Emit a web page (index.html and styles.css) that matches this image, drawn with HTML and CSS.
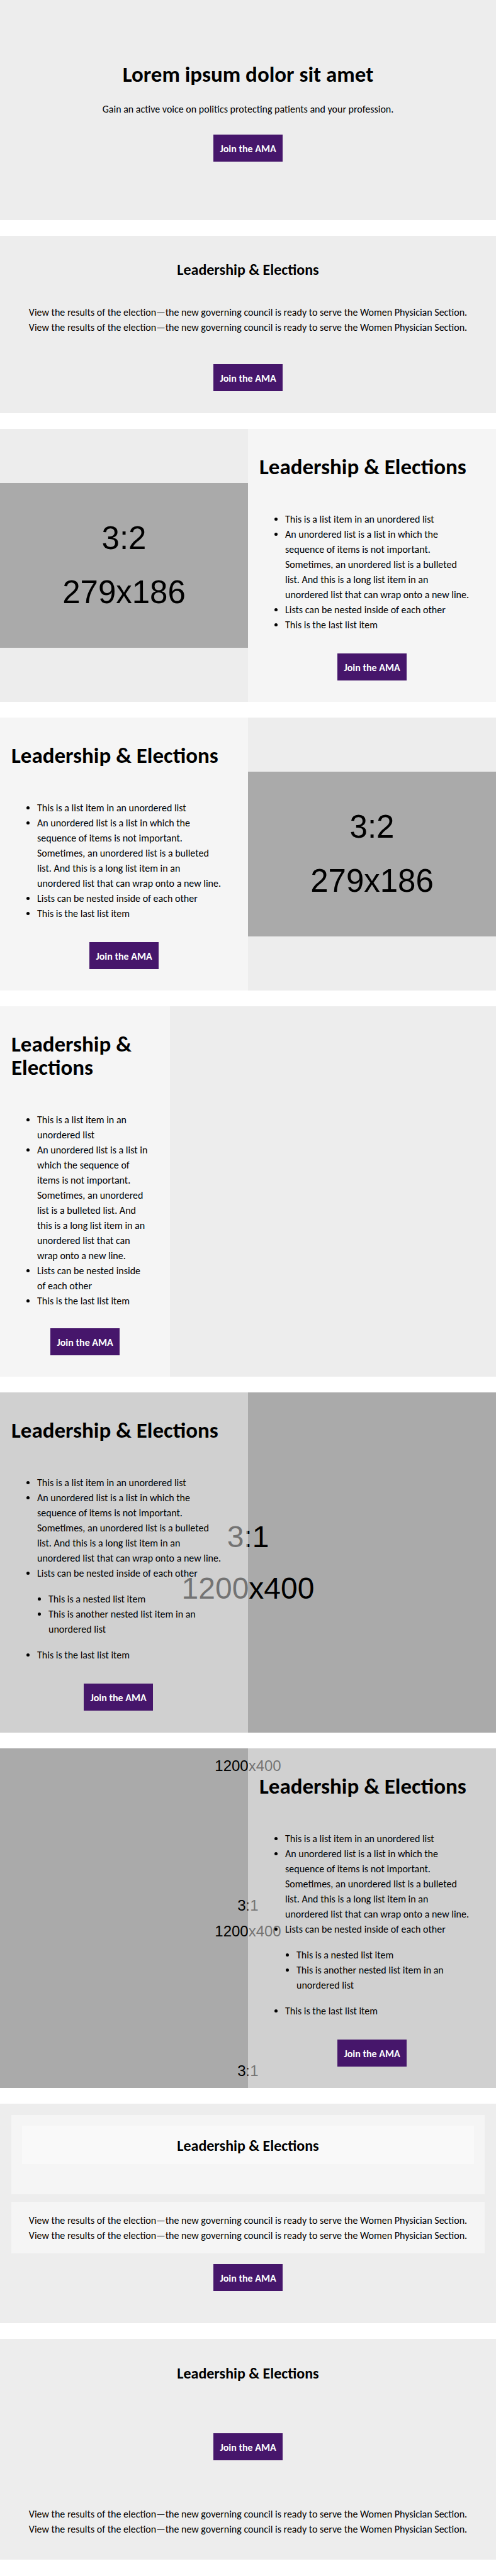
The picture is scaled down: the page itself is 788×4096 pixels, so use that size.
FILE: index.html
```html
<!DOCTYPE html>
<html lang="en">
<head>
<meta charset="utf-8">
<meta name="viewport" content="width=device-width, initial-scale=1">
<title>Leadership &amp; Elections</title>
<link rel="stylesheet" href="styles.css">
</head>
<body>
<main class="page">
  <section class="band hero">
    <h1 class="title">Lorem ipsum dolor sit amet</h1>
    <p class="hero-text">Gain an active voice on politics protecting patients and your profession.</p>
    <a class="button" href="#join">Join the AMA</a>
  </section>

  <section class="band notice">
    <h2 class="subtitle">Leadership &amp; Elections</h2>
    <p class="notice-text">View the results of the election—the new governing council is ready to serve the Women Physician Section. View the results of the election—the new governing council is ready to serve the Women Physician Section.</p>
    <a class="button" href="#join">Join the AMA</a>
  </section>

  <section class="band split">
    <div class="media">
      <div class="placeholder"><span>3:2</span><span>279x186</span></div>
    </div>
    <div class="panel">
      <h2 class="title">Leadership &amp; Elections</h2>
      <ul class="list">
        <li>This is a list item in an unordered list</li>
        <li>An unordered list is a list in which the sequence of items is not important. Sometimes, an unordered list is a bulleted list. And this is a long list item in an unordered list that can wrap onto a new line.</li>
        <li>Lists can be nested inside of each other</li>
        <li>This is the last list item</li>
      </ul>
      <a class="button" href="#join">Join the AMA</a>
    </div>
  </section>

  <section class="band split">
    <div class="panel">
      <h2 class="title">Leadership &amp; Elections</h2>
      <ul class="list">
        <li>This is a list item in an unordered list</li>
        <li>An unordered list is a list in which the sequence of items is not important. Sometimes, an unordered list is a bulleted list. And this is a long list item in an unordered list that can wrap onto a new line.</li>
        <li>Lists can be nested inside of each other</li>
        <li>This is the last list item</li>
      </ul>
      <a class="button" href="#join">Join the AMA</a>
    </div>
    <div class="media">
      <div class="placeholder"><span>3:2</span><span>279x186</span></div>
    </div>
  </section>

  <section class="band split split-third">
    <div class="panel">
      <h2 class="title">Leadership &amp; Elections</h2>
      <ul class="list">
        <li>This is a list item in an unordered list</li>
        <li>An unordered list is a list in which the sequence of items is not important. Sometimes, an unordered list is a bulleted list. And this is a long list item in an unordered list that can wrap onto a new line.</li>
        <li>Lists can be nested inside of each other</li>
        <li>This is the last list item</li>
      </ul>
      <a class="button" href="#join">Join the AMA</a>
    </div>
  </section>

  <section class="band split backdrop-band">
    <div class="backdrop backdrop-cover"><span>3:1</span><span>1200x400</span></div>
    <div class="panel panel-inset">
      <h2 class="title">Leadership &amp; Elections</h2>
      <ul class="list">
        <li>This is a list item in an unordered list</li>
        <li>An unordered list is a list in which the sequence of items is not important. Sometimes, an unordered list is a bulleted list. And this is a long list item in an unordered list that can wrap onto a new line.</li>
        <li>Lists can be nested inside of each other
          <ul class="sublist">
            <li>This is a nested list item</li>
            <li>This is another nested list item in an unordered list</li>
          </ul>
        </li>
        <li>This is the last list item</li>
      </ul>
      <a class="button" href="#join">Join the AMA</a>
    </div>
  </section>

  <section class="band split backdrop-band">
    <div class="backdrop backdrop-tiled">
      <span>1200x400</span>
      <div class="tile"><span>3:1</span><span>1200x400</span></div>
      <span>3:1</span>
    </div>
    <div class="panel panel-end">
      <h2 class="title">Leadership &amp; Elections</h2>
      <ul class="list">
        <li>This is a list item in an unordered list</li>
        <li>An unordered list is a list in which the sequence of items is not important. Sometimes, an unordered list is a bulleted list. And this is a long list item in an unordered list that can wrap onto a new line.</li>
        <li>Lists can be nested inside of each other
          <ul class="sublist">
            <li>This is a nested list item</li>
            <li>This is another nested list item in an unordered list</li>
          </ul>
        </li>
        <li>This is the last list item</li>
      </ul>
      <a class="button" href="#join">Join the AMA</a>
    </div>
  </section>

  <section class="band layered">
    <div class="layer layer-head">
      <div class="layer layer-title"><h2 class="subtitle">Leadership &amp; Elections</h2></div>
    </div>
    <div class="layer layer-text">
      <p>View the results of the election—the new governing council is ready to serve the Women Physician Section. View the results of the election—the new governing council is ready to serve the Women Physician Section.</p>
    </div>
    <a class="button" href="#join">Join the AMA</a>
  </section>

  <section class="band spread">
    <h2 class="subtitle">Leadership &amp; Elections</h2>
    <a class="button" href="#join">Join the AMA</a>
    <p>View the results of the election—the new governing council is ready to serve the Women Physician Section. View the results of the election—the new governing council is ready to serve the Women Physician Section.</p>
  </section>
</main>
</body>
</html>
```
FILE: styles.css
```css
*, *::before, *::after { box-sizing: border-box; }

body {
  margin: 0;
  background: #fff;
  color: #000;
  font: 16px/24px Carlito, Lato, "Open Sans", sans-serif;
}

h1, h2, p, ul { margin: 0; }

.page {
  display: flex;
  flex-direction: column;
  gap: 25px;
}

.band { background: #ededed; }

.title {
  font-size: 35px;
  line-height: 37px;
  font-weight: 700;
}

.subtitle {
  font-size: 24px;
  line-height: 29px;
  font-weight: 700;
}

.button {
  display: block;
  padding: 14px 10px 11px;
  background: #46166b;
  color: #fff;
  font-weight: 700;
  line-height: 18px;
  text-decoration: none;
  white-space: nowrap;
}

.hero, .notice, .layered, .spread {
  display: flex;
  flex-direction: column;
  align-items: center;
  text-align: center;
}

.hero { padding: 100px 18px 93px; }
.hero-text { margin: 25px 0 28px; }

.notice { padding: 39px 36px 35px; }
.notice-text { margin: 42px 0 46px; }

.split {
  display: grid;
  grid-template-columns: 1fr 1fr;
}

.split-third { grid-template-columns: 12fr 23fr; }

.panel {
  display: flex;
  flex-direction: column;
  padding: 42px 18px 34px;
  background: rgba(255, 255, 255, 0.45);
}

.panel .button { align-self: center; }
.panel-inset { padding-bottom: 35px; }
.panel-inset .button { margin-right: 18px; }

.list {
  margin: 53px 18px 33px 0;
  padding-left: 41px;
}

.split-third .list { margin: 53px 15px 31px 0; }

.sublist {
  margin: 17px 0;
  padding-left: 18px;
  list-style: disc;
}

.media {
  display: flex;
  align-items: center;
}

.placeholder, .backdrop {
  background: #aaa;
  font-family: "Liberation Sans", Arial, sans-serif;
}

.placeholder {
  display: flex;
  flex: 1;
  flex-direction: column;
  align-items: center;
  justify-content: center;
  aspect-ratio: 3 / 2;
  font-size: 51px;
  line-height: 86px;
}

.backdrop-band { position: relative; }

.backdrop {
  position: absolute;
  inset: 0;
  display: flex;
  flex-direction: column;
  align-items: center;
  justify-content: center;
  overflow: hidden;
}

.backdrop-cover {
  font-size: 48px;
  line-height: 82px;
}

.backdrop-tiled {
  gap: 181px;
  font-size: 24px;
  line-height: 41px;
}

.tile {
  display: flex;
  flex-direction: column;
  align-items: center;
}

.backdrop-band .panel { position: relative; }
.panel-end { grid-column: 2; }

.layered { padding: 18px 18px 51px; }

.layer {
  align-self: stretch;
  background: rgba(255, 255, 255, 0.45);
}

.layer-head { padding: 17px 17px 48px; }
.layer-title { padding: 17px 17px 15px; }

.layer-text {
  margin: 12px 0 17px;
  padding: 18px 18px 16px;
}

.spread { padding: 40px 36px 36px; }

.spread .button { margin: 81px 0 74px; }
```
